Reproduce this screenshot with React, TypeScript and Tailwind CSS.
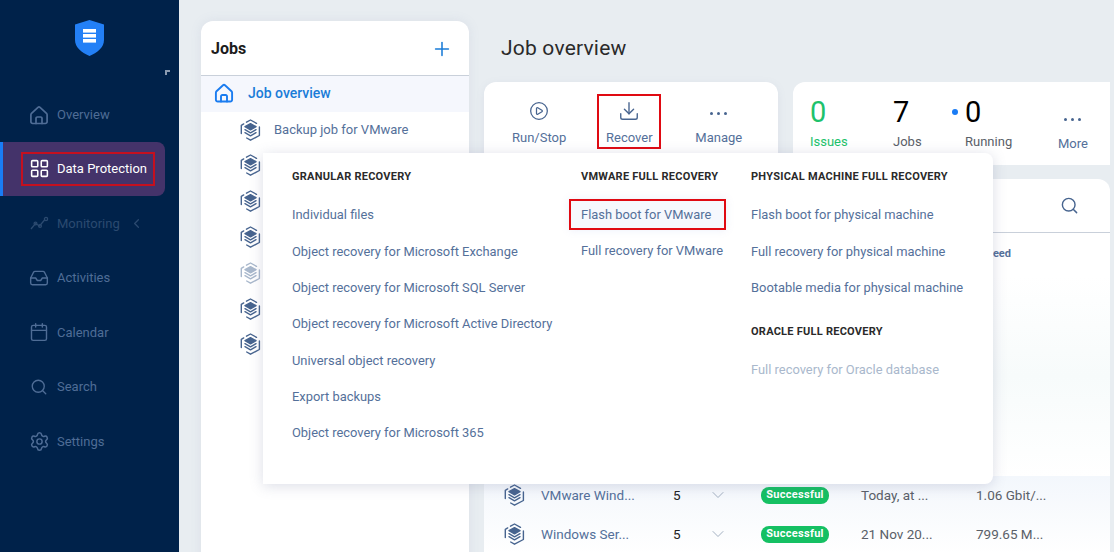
import { Calendar, ChevronDown, ChevronLeft, CirclePlay, Download, Inbox, LayoutGrid, Plus, Search, Settings } from "lucide-react";
import type { ReactNode } from "react";

function HomeIcon({ color, size = 20, width = 1.7 }: { color: string; size?: number; width?: number }) {
  return (
    <svg width={size} height={size} viewBox="0 0 20 20" fill="none" stroke={color} strokeWidth={width} strokeLinejoin="round" strokeLinecap="round">
      <path d="M2.500 8.300 9 2.300a1.500 1.500 0 0 1 2 0l6.500 6a2 2 0 0 1 .6 1.400v7a1.800 1.800 0 0 1-1.800 1.800H3.700a1.800 1.800 0 0 1-1.800-1.800v-7a2 2 0 0 1 .6-1.400z" />
      <path d="M7 18.500v-5.200A1.300 1.300 0 0 1 8.300 12h3.400a1.300 1.300 0 0 1 1.300 1.300v5.200" />
    </svg>
  );
}

function JobIcon({ faded = false }: { faded?: boolean }) {
  const c = faded ? "#a9b8cc" : "#47648f";
  return (
    <svg width="21" height="22" viewBox="0 0 21 22" fill="none" stroke={c} strokeWidth="1.4" strokeLinecap="round" strokeLinejoin="round">
      <path d="M6.500 3.200 10.500 1l6 3.300" />
      <path d="M1.300 14.500V6.300l2.400-1.400" />
      <path d="M19.400 8v8.500l-8.900 4.700-3.800-2.200" />
      <path d="M10.500 4.600 16 7.700l-5.500 3.100L5 7.700z" fill={c} />
      <path d="m5 10.700 5.500 3.100 5.500-3.100" />
      <path d="m5 13.700 5.500 3.100 5.500-3.100" />
    </svg>
  );
}

function MonitoringIcon() {
  return (
    <svg width="19" height="14" viewBox="0 0 19 14" fill="none" stroke="#2b4a70" strokeWidth="1.3">
      <path d="M1 13 5.500 7.500l4 2.500L15 3.500" />
      <circle cx="5.500" cy="7.500" r="1.400" />
      <circle cx="10" cy="10" r="1.400" />
      <circle cx="16" cy="3" r="1.600" />
    </svg>
  );
}

function NavItem({ icon, label, dim }: { icon: ReactNode; label: ReactNode; dim?: boolean }) {
  return (
    <div className={`flex h-[54.600px] items-center pl-[28px] text-[13px] ${dim ? "text-[#2b4a70]" : "text-[#4f6d96]"}`}>
      <span className="flex w-[22px] justify-center">{icon}</span>
      <span className="ml-[7px] flex items-center">{label}</span>
    </div>
  );
}

function Sidebar() {
  return (
    <aside className="flex w-[179px] shrink-0 flex-col bg-[#00224a]">
      <div className="relative h-[87.400px]">
        <svg className="absolute left-[74px] top-[19px]" width="31" height="38" viewBox="0 0 31 38">
          <path d="M15.500 1 30 5.500V21c0 7-6 12.500-14.500 16C7 33.500 1 28 1 21V5.500z" fill="#2380f6" />
          <rect x="9" y="10" width="13" height="3.600" fill="#fff" />
          <rect x="9" y="15" width="13" height="3.600" fill="#fff" />
          <rect x="9" y="20" width="13" height="3.600" fill="#fff" />
        </svg>
        <span className="absolute left-[165px] top-[70px] h-[5px] w-[5px] border-l-2 border-t-2 border-[#8b9bb0]" />
      </div>
      <NavItem icon={<HomeIcon color="#4f6d96" />} label="Overview" />
      <div className="flex h-[54px] w-[165px] items-center rounded-r-lg border-l-[3px] border-[#1a7cf5] bg-[#44336a] pl-[18px] text-[13px] text-white">
        <div className="flex h-[34px] w-[134px] items-center border-2 border-[#c4101f] pl-[6px]">
          <LayoutGrid size={21} strokeWidth={1.8} color="#fff" />
          <span className="ml-[7px]">Data Protection</span>
        </div>
      </div>
      <NavItem
        dim
        icon={<MonitoringIcon />}
        label={
          <>
            Monitoring
            <ChevronLeft size={15} className="ml-[9px]" />
          </>
        }
      />
      <NavItem icon={<Inbox size={20} strokeWidth={1.7} color="#4f6d96" />} label="Activities" />
      <NavItem icon={<Calendar size={20} strokeWidth={1.7} color="#4f6d96" />} label="Calendar" />
      <NavItem icon={<Search size={18} strokeWidth={1.8} color="#4f6d96" />} label="Search" />
      <NavItem icon={<Settings size={21} strokeWidth={1.7} color="#4f6d96" />} label="Settings" />
    </aside>
  );
}

function JobsPanel() {
  return (
    <section className="h-[560px] w-[268px] shrink-0 rounded-t-xl bg-white shadow-[0_0_12px_rgba(120,130,170,0.12)]">
      <div className="flex h-[55px] items-center justify-between border-b border-[#c9d0da] pl-[10px] pr-[16px] pt-[1px]">
        <span className="text-[16px] font-bold text-[#1c1c1c]">Jobs</span>
        <Plus size={22} strokeWidth={1.7} color="#1a7cd8" />
      </div>
      <div className="flex h-[36px] items-center bg-[#f5f7fd] pb-[2px] pl-[13px] text-[14px] font-medium text-[#1a7cd8]">
        <HomeIcon color="#1a7cf0" width={1.9} />
        <span className="ml-[14px]">Job overview</span>
      </div>
      <div className="flex h-[35px] items-center pl-[39px] text-[13px] text-[#54709a]">
        <JobIcon />
        <span className="ml-[13px]">Backup job for VMware</span>
      </div>
      {[false, false, false, true, false, false].map((faded, i) => (
        <div key={i} className="flex h-[35.900px] items-center pl-[39px]">
          <JobIcon faded={faded} />
        </div>
      ))}
    </section>
  );
}

function ToolButton({ icon, label }: { icon: ReactNode; label: string }) {
  return (
    <div className="flex flex-col items-center pt-[2px] text-[13px] text-[#54709a]">
      <span className="flex h-[28px] items-center">{icon}</span>
      <span className="mt-[3px]">{label}</span>
    </div>
  );
}

function Dots() {
  return (
    <span className="flex gap-[4px]">
      <span className="h-[3px] w-[3px] rounded-full bg-[#47648f]" />
      <span className="h-[3px] w-[3px] rounded-full bg-[#47648f]" />
      <span className="h-[3px] w-[3px] rounded-full bg-[#47648f]" />
    </span>
  );
}

function Stat({ value, label, green }: { value: string; label: string; green?: boolean }) {
  return (
    <div className={`flex flex-col ${green ? "text-[#1dc26c]" : "text-[#5a6068]"}`}>
      <span className={`text-[29px] leading-[34px] ${green ? "" : "text-black"}`}>{value}</span>
      <span className="mt-[3px] text-[13px]">{label}</span>
    </div>
  );
}

function TableRow({ name, date, speed }: { name: string; date: string; speed: string }) {
  return (
    <div className="flex h-[39px] items-center pl-[20px] text-[13.500px] text-[#5a6068]">
      <JobIcon />
      <span className="ml-[16px] w-[132px] text-[#54709a]">{name}</span>
      <span className="w-[35px] text-[#222]">5</span>
      <ChevronDown size={20} strokeWidth={1.1} color="#9aa8bb" />
      <span className="ml-[33px] flex h-[17px] w-[68px] items-center justify-center rounded-[8px] bg-[#15c063] text-[11px] font-bold tracking-[0.3px] text-white">Successful</span>
      <span className="ml-[32px] w-[115px]">{date}</span>
      <span>{speed}</span>
    </div>
  );
}

const granular = [
  "Individual files",
  "Object recovery for Microsoft Exchange",
  "Object recovery for Microsoft SQL Server",
  "Object recovery for Microsoft Active Directory",
  "Universal object recovery",
  "Export backups",
  "Object recovery for Microsoft 365",
];

function Heading({ children }: { children: ReactNode }) {
  return <div className="flex h-[20px] items-center text-[11px] font-bold tracking-[0.25px] text-[#2a2a2a]">{children}</div>;
}

function MenuItem({ children, disabled }: { children: ReactNode; disabled?: boolean }) {
  return <div className={`flex h-[36.400px] items-center whitespace-nowrap ${disabled ? "text-[#a9b8cc]" : "text-[#54709a]"}`}>{children}</div>;
}

function RecoverMenu() {
  return (
    <div className="absolute left-[263px] top-[153px] flex h-[331px] w-[730px] rounded-br-lg rounded-tr-lg bg-white pt-[14px] text-[12.900px] shadow-[0_2px_14px_rgba(90,100,140,0.22)]">
      <div className="ml-[29px] w-[289px]">
        <Heading>GRANULAR RECOVERY</Heading>
        <div className="mt-[9.600px]">
          {granular.map((g) => (
            <MenuItem key={g}>{g}</MenuItem>
          ))}
        </div>
      </div>
      <div className="w-[170px]">
        <Heading>VMWARE FULL RECOVERY</Heading>
        <div className="mt-[12px]">
          <div className="-ml-[12px] flex h-[31px] w-[157px] items-center border-2 border-[#e00a12] bg-[#f6f8fd] pl-[10px] text-[#54709a] shadow-[0_0_8px_rgba(130,150,220,0.15)]">Flash boot for VMware</div>
          <div className="mt-[2px]">
            <MenuItem>Full recovery for VMware</MenuItem>
          </div>
        </div>
      </div>
      <div>
        <Heading>PHYSICAL MACHINE FULL RECOVERY</Heading>
        <div className="mt-[9.600px]">
          <MenuItem>Flash boot for physical machine</MenuItem>
          <MenuItem>Full recovery for physical machine</MenuItem>
          <MenuItem>Bootable media for physical machine</MenuItem>
        </div>
        <div className="mt-[16px]">
          <Heading>ORACLE FULL RECOVERY</Heading>
        </div>
        <div className="mt-[10px]">
          <MenuItem disabled>Full recovery for Oracle database</MenuItem>
        </div>
      </div>
    </div>
  );
}

export default function App() {
  return (
    <div className="relative flex h-[552px] w-[1114px] overflow-hidden bg-[#e8edf1] font-['Roboto',sans-serif]">
      <Sidebar />
      <div className="flex flex-1 pl-[22px] pr-[4px] pt-[21px]">
        <JobsPanel />
        <main className="ml-[15px] flex-1">
          <h1 className="flex h-[54px] items-center pl-[17px] pt-[1px] text-[21px] tracking-[0.2px] text-[#2a2a2a]">Job overview</h1>
          <div className="mt-[7px] flex gap-[15px]">
            <div className="relative flex h-[83px] w-[294px] items-center rounded-t-xl bg-white pb-[4px] pl-[28px] shadow-[0_2px_8px_rgba(120,130,170,0.1)]">
              <ToolButton icon={<CirclePlay size={20} strokeWidth={1.5} color="#47648f" />} label="Run/Stop" />
              <div className="ml-[31px] flex h-[55px] w-[64px] items-center justify-center border-2 border-[#e00a12]">
                <ToolButton icon={<Download size={22} strokeWidth={1.5} color="#47648f" />} label="Recover" />
              </div>
              <div className="ml-[34px]">
                <ToolButton icon={<span className="pt-[4px]"><Dots /></span>} label="Manage" />
              </div>
            </div>
            <div className="flex h-[83px] flex-1 items-start rounded-l-xl bg-white pl-[17px] pt-[13px]">
              <div className="w-[83px]">
                <Stat green value="0" label="Issues" />
              </div>
              <div className="w-[59px]">
                <Stat value="7" label="Jobs" />
              </div>
              <span className="mt-[14px] h-[6px] w-[6px] rounded-full bg-[#1a7cf5]" />
              <div className="ml-[7px] w-[93px]">
                <Stat value="0" label="Running" />
              </div>
              <div className="flex flex-col items-center pt-[23px] text-[13px] text-[#54709a]">
                <Dots />
                <span className="mt-[13px]">More</span>
              </div>
            </div>
          </div>
          <div className="mt-[14px] h-[400px] rounded-t-xl bg-white">
            <div className="flex h-[54px] items-center justify-end border-b border-[#c9d0da] pr-[31px]">
              <Search size={19} strokeWidth={1.8} color="#47648f" />
            </div>
            <div className="flex h-[43px] items-center justify-end pr-[99px] text-[11px] font-bold text-[#54709a]">Speed</div>
            <div className="h-[199.500px] bg-gradient-to-b from-white via-[#f7fbfb] to-white" />
            <div className="bg-gradient-to-b from-[#f3f7fc] to-white">
              <TableRow name="VMware Wind..." date="Today, at ..." speed="1.06 Gbit/..." />
              <TableRow name="Windows Ser..." date="21 Nov 20..." speed="799.65 M..." />
            </div>
          </div>
        </main>
      </div>
      <RecoverMenu />
    </div>
  );
}
